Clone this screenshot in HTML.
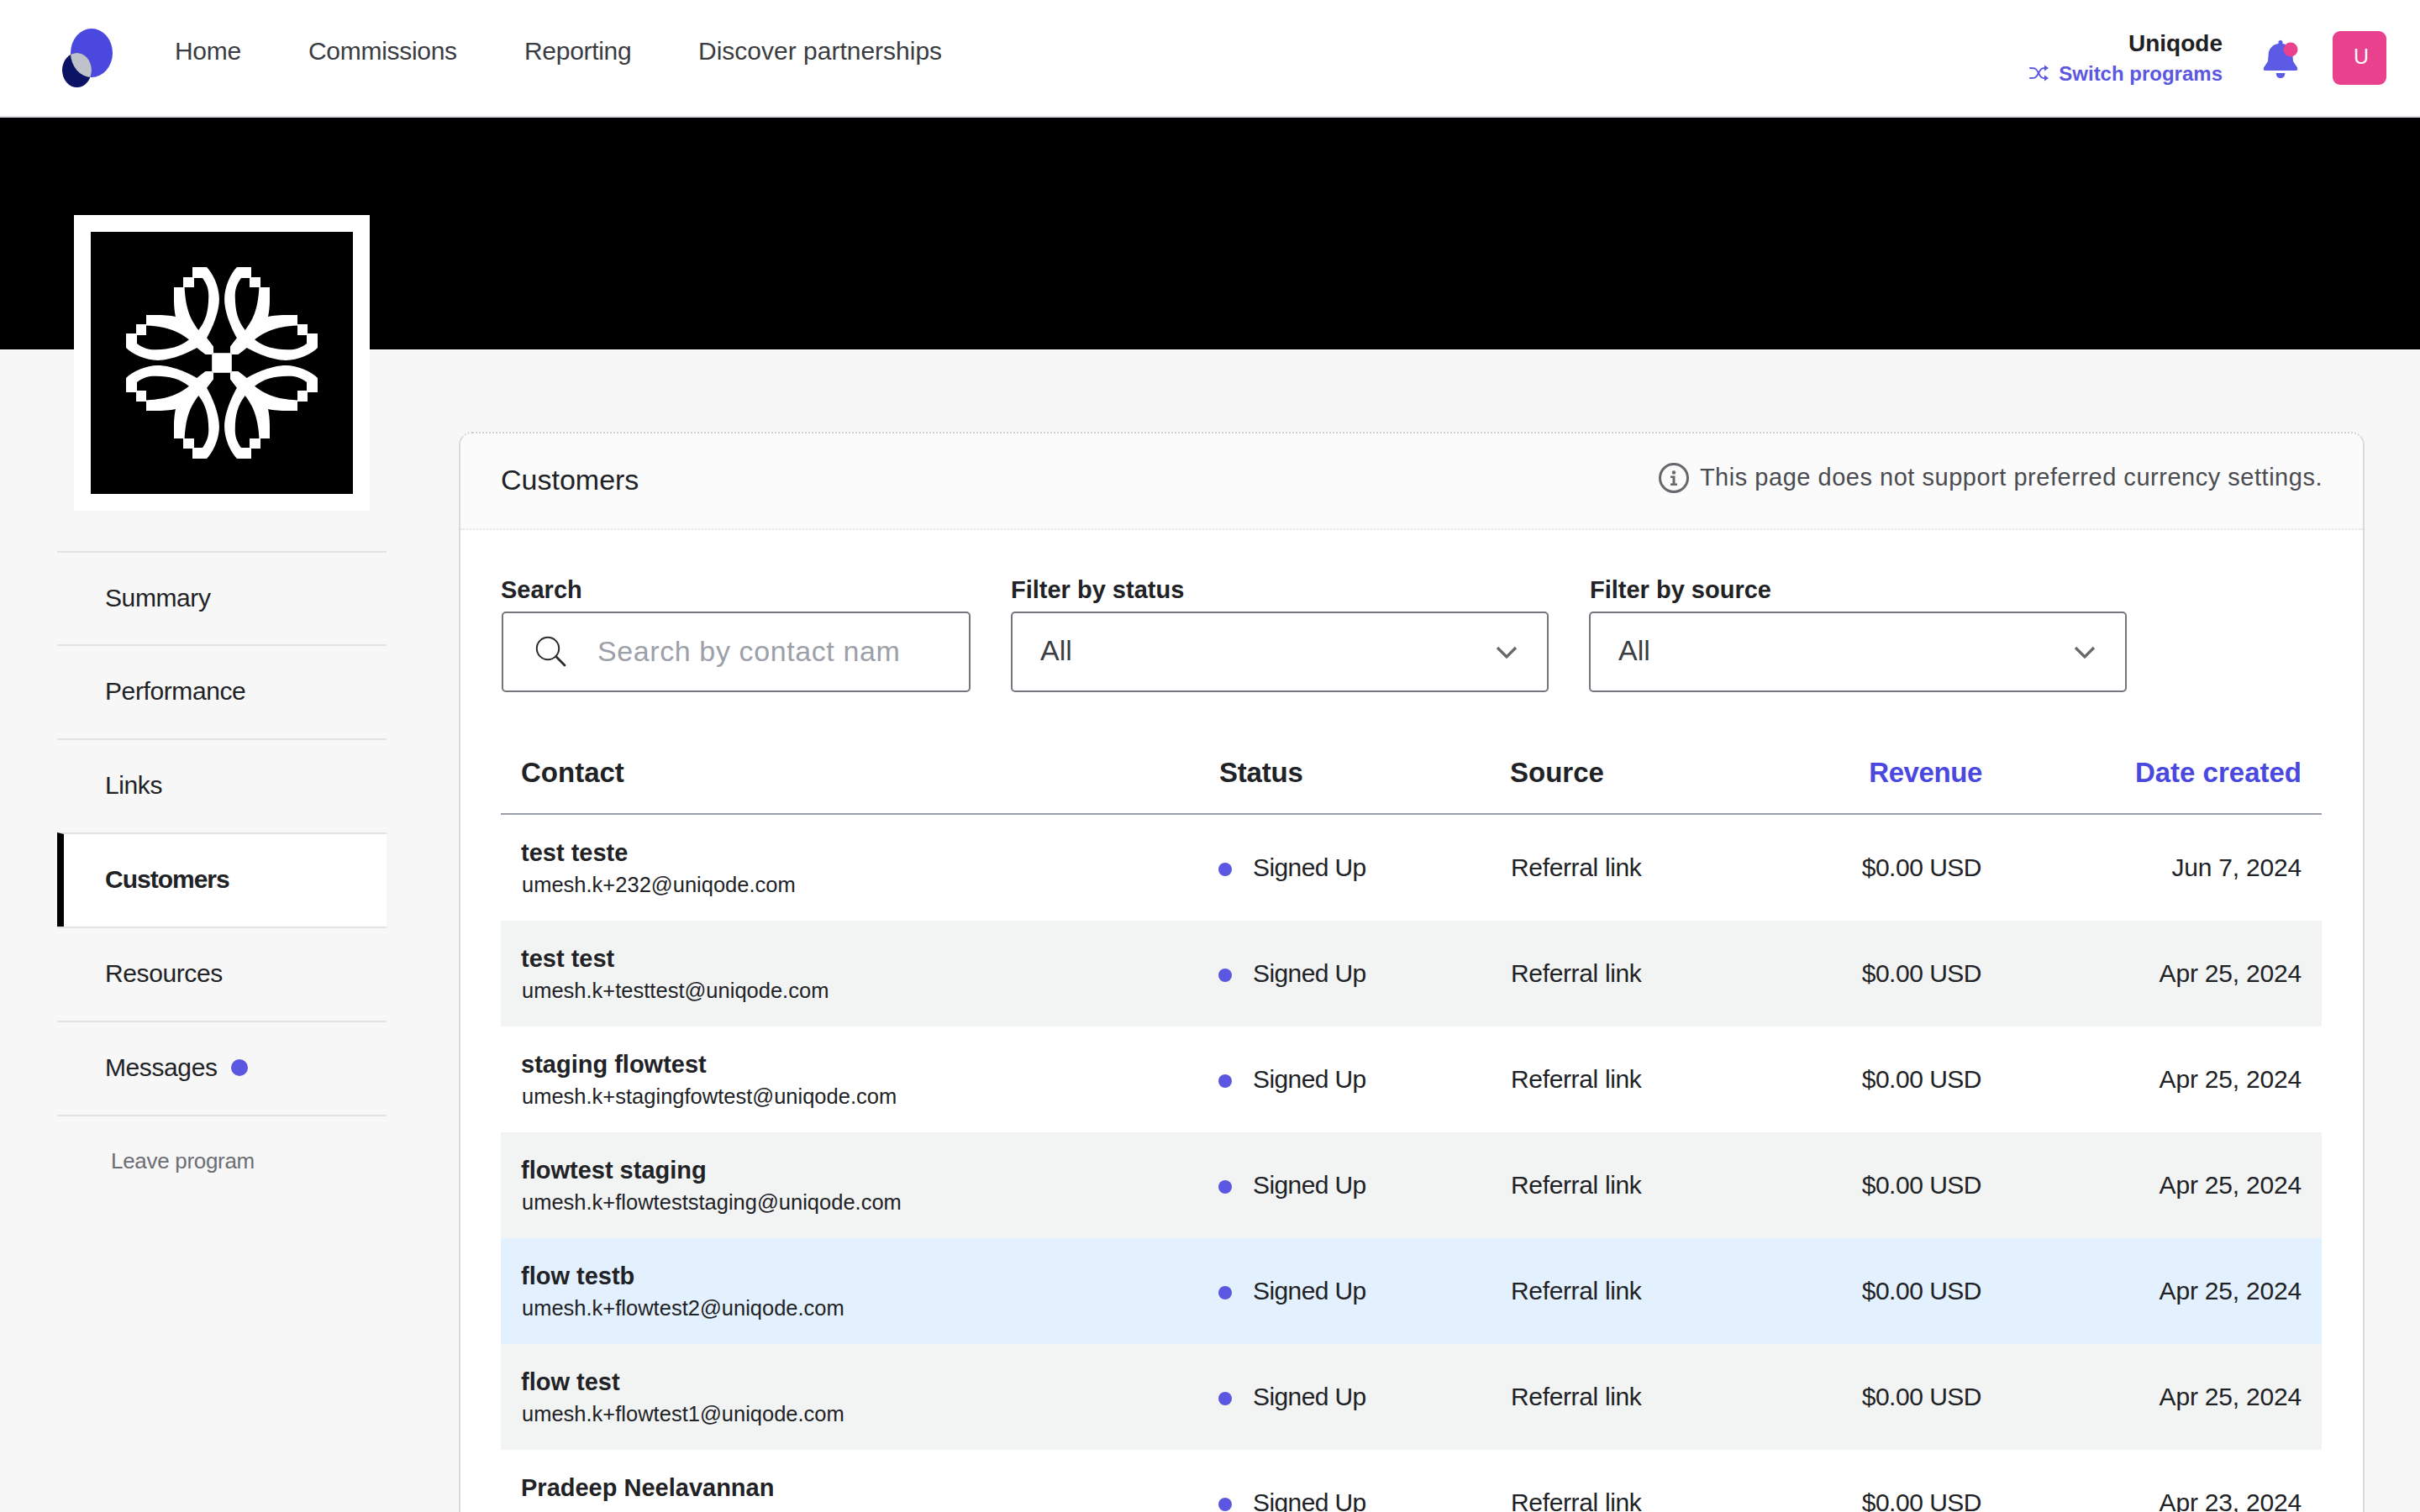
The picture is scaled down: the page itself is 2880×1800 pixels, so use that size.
<!DOCTYPE html>
<html><head><meta charset="utf-8">
<style>
*{box-sizing:border-box;margin:0;padding:0}
html,body{width:2880px;height:1800px;overflow:hidden}
body{background:#f7f7f7;font-family:"Liberation Sans",sans-serif;color:#212226;position:relative}
.abs{position:absolute}
.t{position:absolute;white-space:nowrap;line-height:1}
#hdr{left:0;top:0;width:2880px;height:140px;background:#fff;border-bottom:2px solid #dfe0e6}
.nav{position:absolute;top:46px;font-size:30px;letter-spacing:-0.3px;color:#3a3c41;white-space:nowrap;line-height:1}
#banner{left:0;top:140px;width:2880px;height:277px;background:#000;border-bottom:1px solid #fff}
#logo{left:88px;top:256px;width:352px;height:352px;background:#fff;padding:20px}
#logo .in{width:312px;height:312px;background:#000;position:relative}
.side{position:absolute;left:68px;width:392px;height:112px;border-top:2px solid #e1e2e5}
.side span{position:absolute;left:57px;top:39px;font-size:30px;letter-spacing:-0.4px;line-height:1;color:#212226;white-space:nowrap}
.side.act{background:#fff;border-left:8px solid #000}
.side.act span{left:49px;font-weight:bold;letter-spacing:-1px}
#card{left:546px;top:514px;width:2268px;height:1400px;background:#fff;border:2px solid #d9dadf;border-top:2px dotted #cfd0d4;border-radius:16px;overflow:hidden}
#chead{position:absolute;left:0;top:0;width:100%;height:115px;background:#fbfbfb;border-bottom:2px dotted #e6e6e6}
.lbl{position:absolute;top:688px;font-size:29px;font-weight:bold;color:#212226;white-space:nowrap;line-height:1}
.inp{position:absolute;top:728px;height:96px;border:2px solid #74767c;border-radius:5px;background:#fff}
.row{position:absolute;left:596px;width:2167px;height:126px}
.row.g{background:#f2f3f3}
.row.h{background:#e3f0fd}
.row div{position:absolute;white-space:nowrap;line-height:1}
.nm{left:24px;top:31px;font-weight:bold;font-size:29px;color:#212226}
.em{left:25px;top:71px;font-size:25.5px;color:#212226}
.row .dot{left:854px;top:57px;width:16px;height:16px;border-radius:50%;background:#5b57e0}
.st{left:895px;top:48px;font-size:30px;letter-spacing:-0.6px;color:#212226}
.src{left:1202px;top:48px;font-size:30px;letter-spacing:-0.35px;color:#212226}
.rev{right:405px;top:48px;font-size:30px;letter-spacing:-0.5px;color:#212226}
.dt{right:24px;top:48px;font-size:30px;letter-spacing:-0.2px;color:#212226}
.th{position:absolute;top:903px;font-size:33px;font-weight:bold;line-height:1;white-space:nowrap;color:#212226}
@media (max-width:1600px){html{zoom:0.5}}
</style></head><body>
<div id="hdr" class="abs">
  <svg class="abs" style="left:70px;top:30px" width="70" height="78" viewBox="0 0 70 78">
    <defs><clipPath id="cb"><ellipse cx="39" cy="33" rx="25" ry="29"/></clipPath></defs>
    <ellipse cx="39" cy="33" rx="25" ry="29" fill="#4b48e0"/>
    <ellipse cx="21.5" cy="53.5" rx="17.5" ry="20.5" fill="#0b1464"/>
    <ellipse cx="21.5" cy="53.5" rx="17.5" ry="20.5" fill="#bfc1cb" clip-path="url(#cb)"/>
  </svg>
  <div class="nav" style="left:208px">Home</div>
  <div class="nav" style="left:367px">Commissions</div>
  <div class="nav" style="left:624px">Reporting</div>
  <div class="nav" style="left:831px;letter-spacing:0">Discover partnerships</div>
  <div class="t" style="right:235px;top:38px;font-size:28px;font-weight:bold;color:#1f2023">Uniqode</div>
  <div class="t" style="right:235px;top:76px;font-size:24px;font-weight:bold;color:#5b57e0">Switch programs</div>
  <svg class="abs" style="left:2414px;top:76px" width="26" height="22" viewBox="0 0 26 22">
    <g fill="none" stroke="#5b57e0" stroke-width="1.9" stroke-linecap="round" stroke-linejoin="round">
      <path d="M2,5 C8,5 9,5 12,11 C15,17 16,17 21,17"/>
      <path d="M2,17 C8,17 9,17 12,11 C15,5 16,5 21,5"/>
    </g>
    <path d="M19,1.5 L24,5 L19,8.5 Z M19,13.5 L24,17 L19,20.5 Z" fill="#5b57e0"/>
  </svg>
  <svg class="abs" style="left:2692px;top:45px" width="44" height="50" viewBox="0 0 44 50">
    <path d="M19.5,7 L19.5,4.5 Q22,1 24.5,4.5 L24.5,7 C31,8 35,12 36.2,18 L37,28 L42,35.5 Q43,39 40,39 L4,39 Q1,39 2,35.5 L7,28 L7.8,18 C9,12 13,8 19.5,7 Z" fill="#5b5be6"/>
    <path d="M16.7,42 L27.4,42 Q27,48 22,48 Q17,48 16.7,42 Z" fill="#5b5be6"/>
    <circle cx="34" cy="14" r="8.5" fill="#e9418d"/>
  </svg>
  <div class="abs" style="left:2776px;top:37px;width:64px;height:64px;border-radius:9px;background:#e9418d"></div>
  <div class="t" style="left:2801px;top:55px;font-size:25px;color:#fff">U</div>
</div>
<div id="banner" class="abs"></div>
<div id="logo" class="abs"><div class="in"></div></div>
<svg class="abs" style="left:144px;top:312px" width="240" height="240" viewBox="-120 -120 240 240">
  <defs>
    <path id="pt" fill-rule="evenodd" d="M -10,-12 L -10,-19.5 L -17.9,-29.8 C -12,-40 -3,-60 -3.1,-76.3 C -3.2,-90 -10,-106 -18,-114 L -35,-114 L -35,-102 L -46,-102 L -46,-90 L -57,-90 L -57,-76 C -57,-66 -56,-59 -54.5,-52.5 L -13,-11 Z M -27.7,-39 C -36,-50 -43,-62 -44.4,-90 L -33,-90 L -33,-101 L -23,-101 C -17,-93 -15.5,-86 -15.8,-78 C -16,-62 -19,-50 -27.7,-39 Z"/>
    <g id="q">
      <use href="#pt"/>
      <use href="#pt" transform="matrix(0,1,1,0,0,0)"/>
      
    </g>
  </defs>
  <g fill="#fff">
    <use href="#q"/>
    <use href="#q" transform="scale(-1,1)"/>
    <use href="#q" transform="scale(1,-1)"/>
    <use href="#q" transform="scale(-1,-1)"/>
    <rect x="-11.8" y="-11.8" width="23.6" height="23.6"/>
  </g>
</svg>


<div class="side" style="top:656px"><span>Summary</span></div>
<div class="side" style="top:767px"><span>Performance</span></div>
<div class="side" style="top:879px"><span>Links</span></div>
<div class="side act" style="top:991px"><span>Customers</span></div>
<div class="side" style="top:1103px"><span>Resources</span></div>
<div class="side" style="top:1215px"><span>Messages</span></div>
<div class="abs" style="left:275px;top:1261px;width:20px;height:20px;border-radius:50%;background:#5b57e0"></div>
<div class="abs" style="left:68px;top:1327px;width:392px;border-top:2px solid #e1e2e5"></div>
<div class="t" style="left:132px;top:1369px;font-size:26px;letter-spacing:-0.3px;color:#6b6e74">Leave program</div>

<div id="card" class="abs">
  <div id="chead"></div>
</div>
<div class="t" style="left:596px;top:554px;font-size:34px;color:#212226">Customers</div>
<svg class="abs" style="left:1973px;top:550px" width="38" height="38" viewBox="0 0 38 38">
  <circle cx="19" cy="19" r="16.5" fill="none" stroke="#66686d" stroke-width="3"/>
  <circle cx="19" cy="12.5" r="2.2" fill="#66686d"/>
  <path d="M15,16.5 L20.5,16.5 L20.5,25.5 L23,25.5 L23,28 L15,28 L15,25.5 L17.5,25.5 L17.5,19 L15,19 Z" fill="#66686d"/>
</svg>
<div class="t" style="right:116px;top:554px;font-size:29px;letter-spacing:0.52px;color:#4a4c51">This page does not support preferred currency settings.</div>

<div class="lbl" style="left:596px">Search</div>
<div class="lbl" style="left:1203px">Filter by status</div>
<div class="lbl" style="left:1892px">Filter by source</div>
<div class="inp" style="left:597px;width:558px"></div>
<div class="inp" style="left:1203px;width:640px"></div>
<div class="inp" style="left:1891px;width:640px"></div>
<svg class="abs" style="left:634px;top:754px" width="44" height="44" viewBox="0 0 44 44">
  <circle cx="18" cy="18" r="13.2" fill="none" stroke="#2a2c30" stroke-width="2"/>
  <path d="M27.6,27.6 L38,38" stroke="#2a2c30" stroke-width="2.8" stroke-linecap="round"/>
</svg>
<div class="t" style="left:711px;top:758px;font-size:34px;letter-spacing:0.6px;color:#9ca0a8">Search by contact nam</div>
<div class="t" style="left:1238px;top:757px;font-size:34px;color:#3c3e43">All</div>
<div class="t" style="left:1926px;top:757px;font-size:34px;color:#3c3e43">All</div>
<svg class="abs" style="left:1778px;top:766px" width="30" height="22" viewBox="0 0 30 22">
  <path d="M4,5 L15,16 L26,5" fill="none" stroke="#66686d" stroke-width="3.2" stroke-linecap="butt"/>
</svg>
<svg class="abs" style="left:2466px;top:766px" width="30" height="22" viewBox="0 0 30 22">
  <path d="M4,5 L15,16 L26,5" fill="none" stroke="#66686d" stroke-width="3.2" stroke-linecap="butt"/>
</svg>

<div class="th" style="left:620px">Contact</div>
<div class="th" style="left:1451px;letter-spacing:-0.2px">Status</div>
<div class="th" style="left:1797px">Source</div>
<div class="th" style="right:521px;letter-spacing:-0.4px;color:#4b48e0">Revenue</div>
<div class="th" style="right:141px;color:#4b48e0">Date created</div>
<div class="abs" style="left:596px;top:968px;width:2167px;height:2px;background:#9a9ea6"></div>
<div class="row " style="top:970px"><div class="nm">test teste</div><div class="em">umesh.k+232@uniqode.com</div><div class="dot"></div><div class="st">Signed Up</div><div class="src">Referral link</div><div class="rev">$0.00 USD</div><div class="dt">Jun 7, 2024</div></div>
<div class="row g" style="top:1096px"><div class="nm">test test</div><div class="em">umesh.k+testtest@uniqode.com</div><div class="dot"></div><div class="st">Signed Up</div><div class="src">Referral link</div><div class="rev">$0.00 USD</div><div class="dt">Apr 25, 2024</div></div>
<div class="row " style="top:1222px"><div class="nm">staging flowtest</div><div class="em">umesh.k+stagingfowtest@uniqode.com</div><div class="dot"></div><div class="st">Signed Up</div><div class="src">Referral link</div><div class="rev">$0.00 USD</div><div class="dt">Apr 25, 2024</div></div>
<div class="row g" style="top:1348px"><div class="nm">flowtest staging</div><div class="em">umesh.k+flowteststaging@uniqode.com</div><div class="dot"></div><div class="st">Signed Up</div><div class="src">Referral link</div><div class="rev">$0.00 USD</div><div class="dt">Apr 25, 2024</div></div>
<div class="row h" style="top:1474px"><div class="nm">flow testb</div><div class="em">umesh.k+flowtest2@uniqode.com</div><div class="dot"></div><div class="st">Signed Up</div><div class="src">Referral link</div><div class="rev">$0.00 USD</div><div class="dt">Apr 25, 2024</div></div>
<div class="row g" style="top:1600px"><div class="nm">flow test</div><div class="em">umesh.k+flowtest1@uniqode.com</div><div class="dot"></div><div class="st">Signed Up</div><div class="src">Referral link</div><div class="rev">$0.00 USD</div><div class="dt">Apr 25, 2024</div></div>
<div class="row " style="top:1726px"><div class="nm">Pradeep Neelavannan</div><div class="dot"></div><div class="st">Signed Up</div><div class="src">Referral link</div><div class="rev">$0.00 USD</div><div class="dt">Apr 23, 2024</div></div>
</body></html>
